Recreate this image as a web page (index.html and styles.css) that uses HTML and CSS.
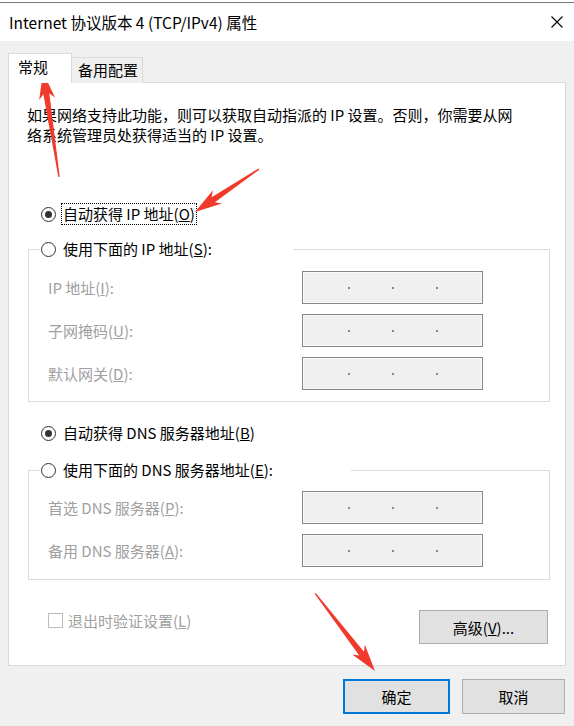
FILE: index.html
```html
<!DOCTYPE html>
<html lang="zh-CN">
<head>
  <meta charset="UTF-8" />
  <title>Internet 协议版本 4 (TCP/IPv4) 属性</title>
  <link rel="stylesheet" href="styles.css">
</head>
<body>
  <div class="window">
    <div class="edge"></div>
    <div class="titlebar">
      <span class="title">Internet 协议版本 4 (TCP/IPv4) 属性</span>
      <svg class="close" width="12" height="12" viewBox="0 0 12 12">
        <path d="M0.5 0.5 L11.5 11.5 M11.5 0.5 L0.5 11.5" stroke="#000" stroke-width="1.1" fill="none"/>
      </svg>
    </div>

    <div class="tabs">
      <div class="tab tab-active">常规</div>
      <div class="tab">备用配置</div>
    </div>

    <div class="panel">
      <p class="desc">如果网络支持此功能，则可以获取自动指派的 IP 设置。否则，你需要从网<br>络系统管理员处获得适当的 IP 设置。</p>

      <div class="radio-row first">
        <span class="radio checked"></span>
        <span class="radio-label focused">自动获得 IP 地址(<u>O</u>)</span>
      </div>

      <div class="group">
        <div class="legend">
          <span class="radio"></span>
          <span class="radio-label">使用下面的 IP 地址(<u>S</u>):</span>
        </div>
        <div class="field-row top">
          <span class="field-label">IP 地址(<u>I</u>):</span>
          <div class="ip-field"><i></i><i></i><i></i></div>
        </div>
        <div class="field-row">
          <span class="field-label">子网掩码(<u>U</u>):</span>
          <div class="ip-field"><i></i><i></i><i></i></div>
        </div>
        <div class="field-row">
          <span class="field-label">默认网关(<u>D</u>):</span>
          <div class="ip-field"><i></i><i></i><i></i></div>
        </div>
      </div>

      <div class="radio-row dns">
        <span class="radio checked"></span>
        <span class="radio-label">自动获得 DNS 服务器地址(<u>B</u>)</span>
      </div>

      <div class="group group-dns">
        <div class="legend">
          <span class="radio"></span>
          <span class="radio-label">使用下面的 DNS 服务器地址(<u>E</u>):</span>
        </div>
        <div class="field-row">
          <span class="field-label">首选 DNS 服务器(<u>P</u>):</span>
          <div class="ip-field"><i></i><i></i><i></i></div>
        </div>
        <div class="field-row">
          <span class="field-label">备用 DNS 服务器(<u>A</u>):</span>
          <div class="ip-field"><i></i><i></i><i></i></div>
        </div>
      </div>

      <div class="bottom-row">
        <label class="check">
          <span class="checkbox"></span>
          <span>退出时验证设置(<u>L</u>)</span>
        </label>
        <button class="btn btn-adv">高级(<u>V</u>)...</button>
      </div>
    </div>

    <div class="footer">
      <button class="btn btn-ok">确定</button>
      <button class="btn btn-cancel">取消</button>
    </div>

    <!-- red annotation arrows -->
    <svg class="arrows" width="574" height="726" viewBox="0 0 574 726">
      <g fill="#f23a2c">
        <polygon transform="translate(43 72) rotate(-98.7)" points="0,0 -27,-8 -22,-3 -106,-0.7 -106,0.7 -22,3 -27,8"/>
        <polygon transform="translate(195 212) rotate(146.1)" points="0,0 -27,-8 -22,-3 -77,-0.7 -77,0.7 -22,3 -27,8"/>
        <polygon transform="translate(375 671) rotate(52.4)" points="0,0 -27,-8 -22,-3 -98,-0.7 -98,0.7 -22,3 -27,8"/>
      </g>
    </svg>
  </div>
</body>
</html>
```

FILE: styles.css
```css
html, body {
  margin: 0;
  background: #f0f0f0;
}

body {
  font-family: "Segoe UI", "Noto Sans CJK SC", sans-serif;
  font-size: 15px;
  color: #000;
}

.window {
  position: relative;
  width: 574px;
  height: 726px;
  overflow: hidden;
}

.edge {
  height: 2px;
  background: #fff;
}

.titlebar {
  height: 38px;
  background: #fff;
  border-top: 1px solid #7a7a7a;
  display: flex;
  align-items: center;
  justify-content: space-between;
  padding: 0 11px 0 9px;
}

.title {
  font-size: 15.5px;
  line-height: 20px;
}

/* tabs */
.tabs {
  position: relative;
  z-index: 1;
  display: flex;
  align-items: flex-end;
  height: 30px;
  margin: 12px 0 0 8px;
}

.tab {
  box-sizing: border-box;
  height: 26px;
  width: 71px;
  padding-left: 6px;
  line-height: 24px;
  border: 1px solid #d9d9d9;
  border-left: none;
  border-bottom: none;
  background: #f0f0f0;
}

.tab-active {
  height: 30px;
  width: 64px;
  padding-left: 9px;
  line-height: 26px;
  border-left: 1px solid #d9d9d9;
  background: #fff;
}

/* main panel */
.panel {
  box-sizing: border-box;
  width: 558px;
  height: 584px;
  margin: -1px 0 0 8px;
  border: 1px solid #d9d9d9;
  background: #fff;
  overflow: hidden;
}

.desc {
  margin: 22px 0 0 18px;
  line-height: 20px;
  white-space: nowrap;
}

.radio-row {
  display: flex;
  align-items: center;
  height: 22px;
  margin-left: 32px;
}

.radio-row.first {
  margin-top: 58px;
}

.radio-row.dns {
  margin-top: 20px;
}

.radio {
  box-sizing: border-box;
  width: 15px;
  height: 15px;
  border: 1px solid #333;
  border-radius: 50%;
  background: #fff;
  display: flex;
  align-items: center;
  justify-content: center;
  flex-shrink: 0;
}

.radio.checked::after {
  content: "";
  width: 7px;
  height: 7px;
  border-radius: 50%;
  background: #333;
}

.radio-label {
  box-sizing: border-box;
  height: 22px;
  line-height: 20px;
  margin-left: 5px;
  padding: 0 1px;
  border: 1px solid transparent;
  white-space: nowrap;
}

.radio-label.focused {
  border: 1px dotted #000;
}

/* group boxes */
.group {
  box-sizing: border-box;
  width: 522px;
  margin: 24px 0 0 19px;
  border: 1px solid #dcdcdc;
  padding-bottom: 11px;
}

.group-dns {
  margin-top: 26px;
  padding-bottom: 12px;
}

.legend {
  display: flex;
  align-items: center;
  height: 22px;
  width: 252px;
  margin: -12px 0 0 11px;
  padding-left: 1px;
  background: #fff;
}

.group-dns .legend {
  width: 310px;
}

.field-row {
  display: grid;
  grid-template-columns: 254px 181px;
  align-items: center;
  margin-top: 10px;
  padding-left: 19px;
}

.field-row.top {
  margin-top: 11px;
}

.field-label {
  color: #a0a0a0;
  white-space: nowrap;
}

.ip-field {
  box-sizing: border-box;
  height: 33px;
  border: 1px solid #868686;
  box-shadow: inset 0 0 0 1px #fafafa;
  background: #f0f0f0;
  display: flex;
  align-items: center;
  justify-content: center;
  gap: 42px;
}

.ip-field i {
  width: 2px;
  height: 2px;
  background: #7c88a6;
}

/* bottom area */
.bottom-row {
  display: flex;
  justify-content: space-between;
  align-items: flex-start;
  margin: 30px 17px 0 39px;
}

.check {
  display: flex;
  align-items: center;
  margin-top: 3px;
  height: 15px;
  color: #a0a0a0;
  line-height: 15px;
}

.checkbox {
  box-sizing: border-box;
  width: 15px;
  height: 15px;
  border: 1px solid #bcbcbc;
  margin-right: 5px;
}

.btn {
  box-sizing: border-box;
  font: inherit;
  color: #000;
  background: #e1e1e1;
  border: 1px solid #adadad;
  padding: 0;
}

.btn-adv {
  width: 129px;
  height: 34px;
}

.footer {
  display: flex;
  justify-content: flex-end;
  gap: 12px;
  margin: 13px 9px 0 0;
}

.btn-ok {
  width: 107px;
  height: 35px;
  border: 2px solid #0078d7;
}

.btn-cancel {
  width: 103px;
  height: 35px;
}

.arrows {
  position: absolute;
  left: 0;
  top: 0;
  pointer-events: none;
}
```
